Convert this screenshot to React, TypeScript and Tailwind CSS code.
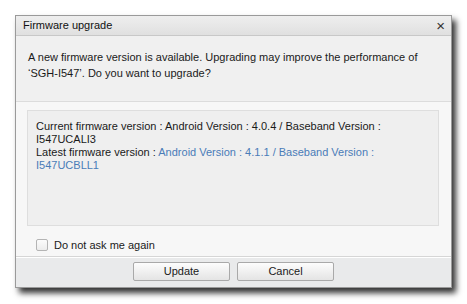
import React from "react";

export default function App() {
  const font = { fontFamily: '"Liberation Sans", Arial, sans-serif' };
  return (
    <div className="w-[467px] h-[304px] bg-white pt-[15px] pl-[15px]" style={font}>
      <div className="w-[437px] h-[273px] flex flex-col border border-[#9a9a9a] bg-[#f7f7f7] shadow-[4px_5px_6px_rgba(0,0,0,0.8)]">
        <div className="h-[20px] flex items-center justify-between pl-[7px] pr-[6px] bg-gradient-to-b from-[#eeeeee] to-[#e0e0e0] border-b border-[#c8c8c8] text-[11px] text-[#111]">
          <span>Firmware upgrade</span>
          <span className="text-[15px] leading-none text-[#333]">×</span>
        </div>
        <div className="h-[66px] bg-[#f0f0f0] border-b border-[#dcdcdc] pl-[12px] pt-[13px] text-[11px] leading-[16px] text-[#1a1a1a]">
          <div>A new firmware version is available. Upgrading may improve the performance of</div>
          <div>‘SGH-I547’. Do you want to upgrade?</div>
        </div>
        <div className="flex-1 flex flex-col pl-[11px] pr-[12px] pt-[8px]">
          <div className="h-[116px] bg-[#efefef] border border-[#dedede] pl-[8px] pt-[9px] text-[11px] leading-[13px] text-[#1a1a1a]">
            <div>Current firmware version : Android Version : 4.0.4 / Baseband Version :</div>
            <div>I547UCALI3</div>
            <div>
              Latest firmware version : <span className="text-[#4a7cb8]">Android Version : 4.1.1 / Baseband Version :</span>
            </div>
            <div className="text-[#4a7cb8]">I547UCBLL1</div>
          </div>
          <div className="flex items-center mt-[11px] pl-[9px] gap-[6px] text-[11px] text-[#1a1a1a]">
            <div className="w-[12px] h-[12px] rounded-[2px] border border-[#b4b4b4] bg-gradient-to-b from-[#fbfbfb] to-[#ececec]" />
            <span>Do not ask me again</span>
          </div>
        </div>
        <div className="h-[31px] bg-[#e9eaeb] border-t border-[#d6d6d6] shadow-[inset_0_1px_0_#ffffff] flex justify-center gap-[7px] pt-[5px]">
          <button className="w-[97px] h-[19px] rounded-[2px] border border-[#a9a9a9] bg-gradient-to-b from-[#fdfdfd] to-[#e4e4e4] text-[11px] text-[#1a1a1a]">
            Update
          </button>
          <button className="w-[97px] h-[19px] rounded-[2px] border border-[#a9a9a9] bg-gradient-to-b from-[#fdfdfd] to-[#e4e4e4] text-[11px] text-[#1a1a1a]">
            Cancel
          </button>
        </div>
      </div>
    </div>
  );
}
